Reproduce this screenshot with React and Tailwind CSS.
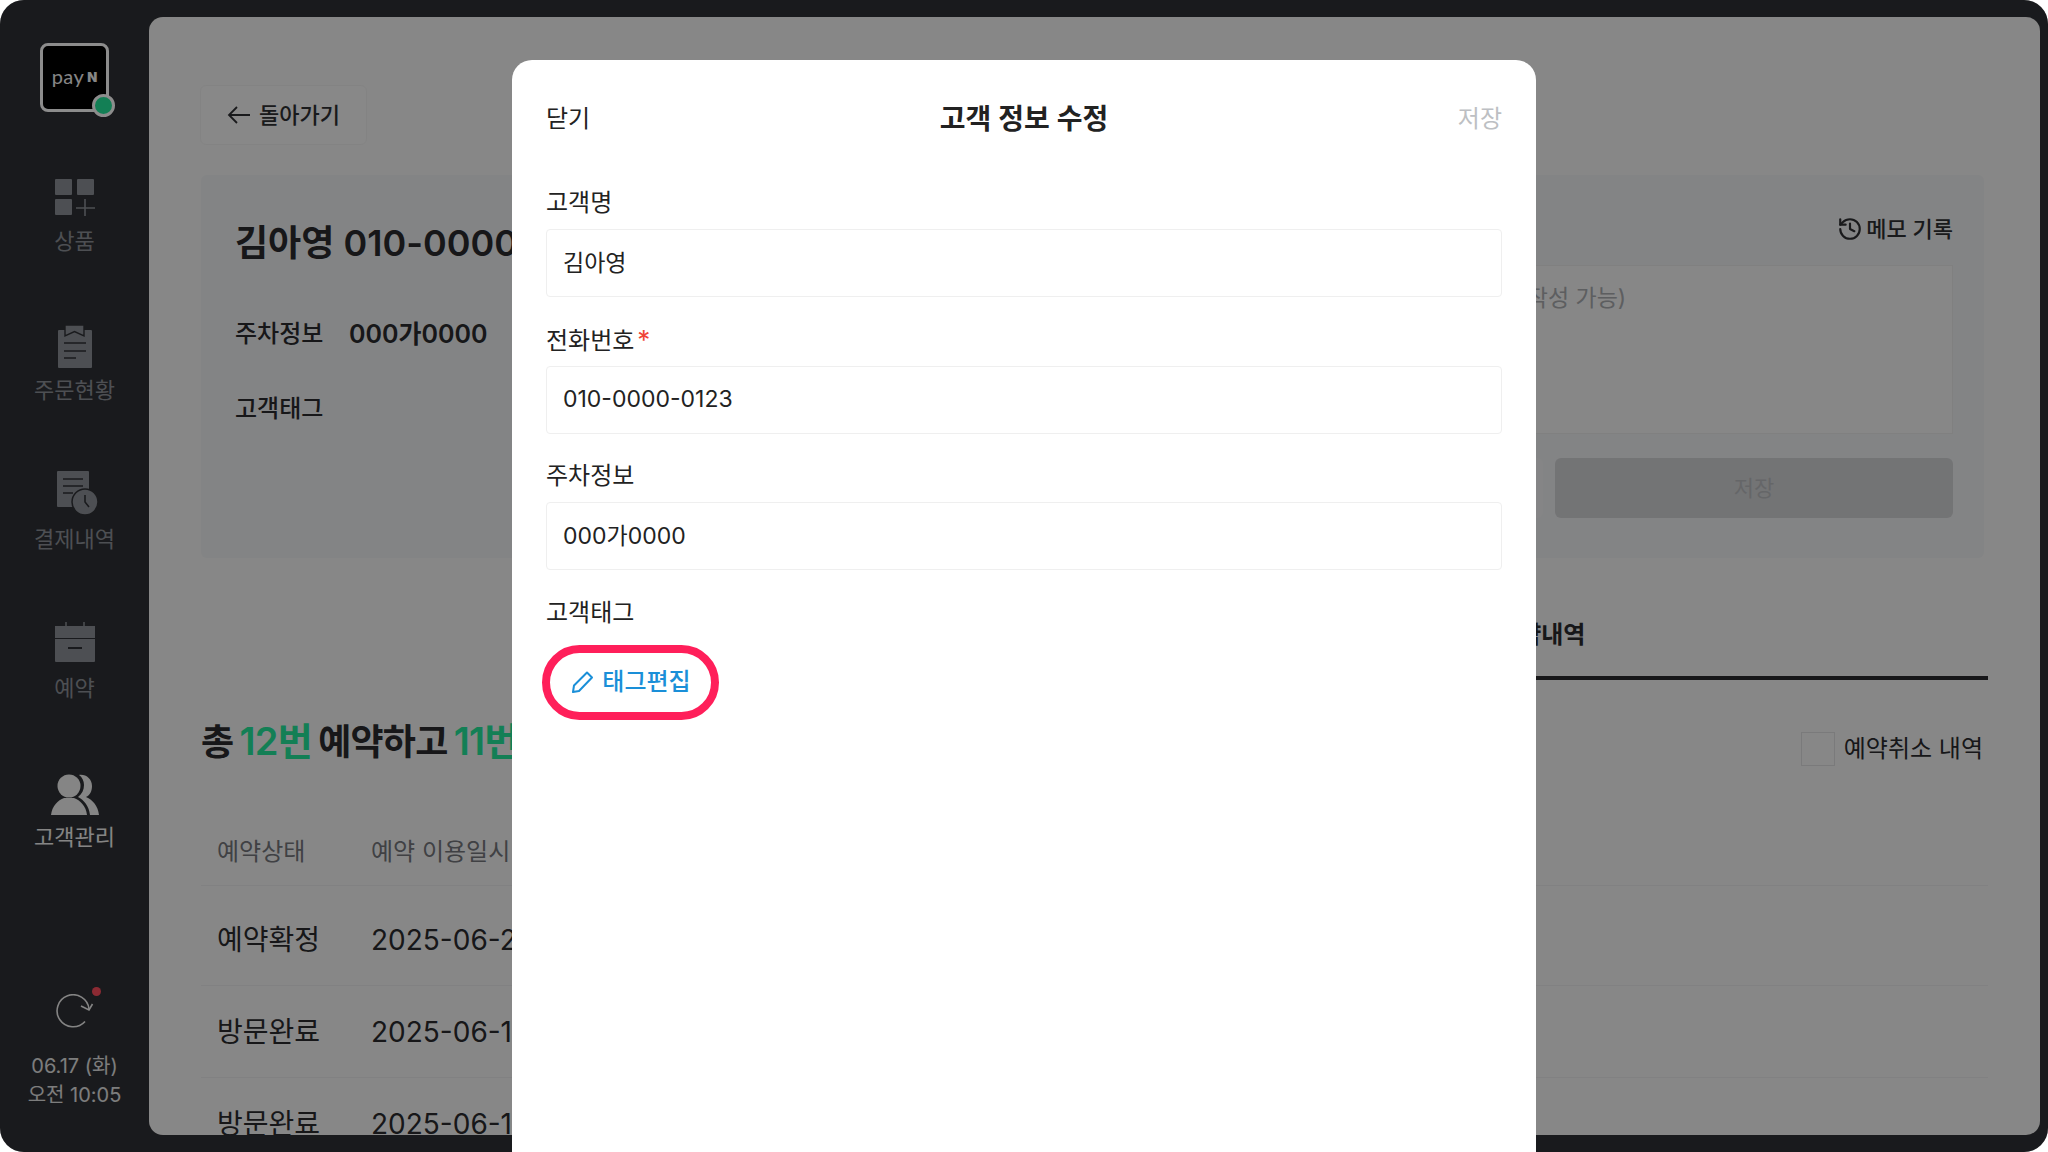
import { History } from "lucide-react";

const FONT = "font-['Inter','Noto_Sans_CJK_KR',sans-serif]";

const ProductIcon = () => (
  <svg width="42" height="40" viewBox="0 0 42 40" fill="none">
    <rect x="1" y="0" width="17" height="16" rx="1" fill="#8d9098" />
    <rect x="23" y="0" width="17" height="16" rx="1" fill="#8d9098" />
    <rect x="1" y="20" width="17" height="16" rx="1" fill="#8d9098" />
    <path d="M31 20v17M22 29h19" stroke="#8d9098" strokeWidth="1.6" />
  </svg>
);

const OrderIcon = () => (
  <svg width="36" height="43" viewBox="0 0 36 43" fill="none">
    <path d="M1 6a1 1 0 0 1 1-1h32a1 1 0 0 1 1 1v36a1 1 0 0 1-1 1H2a1 1 0 0 1-1-1z" fill="#8d9098" />
    <path d="M8 0h19v11l-9.500-4.500L8 11z" fill="#8d9098" stroke="#2f3135" strokeWidth="1.4" />
    <path d="M7 18h22M7 26h22M7 33h12" stroke="#2f3135" strokeWidth="1.6" />
  </svg>
);

const PaymentIcon = () => (
  <svg className="ml-[6px] mb-[2px]" width="42" height="44" viewBox="0 0 42 44" fill="none">
    <rect x="0" y="0" width="32" height="36" rx="1" fill="#8d9098" />
    <path d="M6 8h20M6 15h20M6 22h10" stroke="#2f3135" strokeWidth="1.6" />
    <circle cx="28" cy="31" r="13" fill="#8d9098" stroke="#2f3135" strokeWidth="1.5" />
    <path d="M28 24v7l4 5" stroke="#2f3135" strokeWidth="1.6" />
  </svg>
);

const ReserveIcon = () => (
  <svg className="mb-[4px]" width="40" height="40" viewBox="0 0 40 40" fill="none">
    <path d="M11 0v6M29 0v6" stroke="#8d9098" strokeWidth="1.5" />
    <path d="M0 4h40v12H0z" fill="#8d9098" />
    <path d="M0 17h40v22a1 1 0 0 1-1 1H1a1 1 0 0 1-1-1z" fill="#8d9098" />
    <path d="M13 26h14" stroke="#2f3135" strokeWidth="2" />
  </svg>
);

const CustomerIcon = () => (
  <svg width="48" height="41" viewBox="0 0 48 41" fill="none">
    <path d="M28 1C35 0 41 5 41 12c0 5-2 9-6 11 7 3 12 9 13 18h-9c-1-9-6-15-12-18 4-3 6-7 6-12 0-4-2-8-5-10z" fill="#f2f2f2" />
    <circle cx="18" cy="12" r="11.500" fill="#f2f2f2" />
    <path d="M0 41c1-9 7-15 13-17h10c6 2 12 8 13 17z" fill="#f2f2f2" />
  </svg>
);

const RefreshIcon = () => (
  <svg width="40" height="34" viewBox="0 0 40 34" fill="none">
    <path d="M33 15A16 16 0 1 0 29 27.500" stroke="#f0f0f0" strokeWidth="1.600" />
    <path d="M25 12l8 4 3.500-6" stroke="#f0f0f0" strokeWidth="1.600" />
  </svg>
);

const PenIcon = () => (
  <svg width="24" height="24" viewBox="0 0 24 24" fill="none" stroke="currentColor" strokeWidth="2" strokeLinejoin="round">
    <path d="M3 22l1-6.500L17 2.500l5 5L9 21z" />
  </svg>
);

const navItems = [
  { label: "상품", icon: ProductIcon },
  { label: "주문현황", icon: OrderIcon },
  { label: "결제내역", icon: PaymentIcon },
  { label: "예약", icon: ReserveIcon },
  { label: "고객관리", icon: CustomerIcon, active: true },
];

const rows = [
  { status: "예약확정", date: "2025-06-20 10:00", h: "h-[100px] pt-[8px]" },
  { status: "방문완료", date: "2025-06-12 14:00", h: "h-[92px]" },
  { status: "방문완료", date: "2025-06-10 11:00", h: "h-[92px]" },
];

function Sidebar() {
  return (
    <aside className="w-[149px] shrink-0 flex flex-col items-center pt-[43px] pb-[42px]">
      <div className="relative w-[69px] h-[69px] rounded-[8px] border-[3px] border-[#ffffff] bg-black flex items-center justify-center text-[#f4f4f4] font-['Lato',sans-serif]">
        <span className="text-[20px] leading-none tracking-[0.5px] pb-[3px]">pay</span>
        <span className="text-[13px] font-black leading-none ml-[3px] font-['Inter',sans-serif]">N</span>
        <span className="absolute -right-[9px] -bottom-[8px] w-[23px] h-[23px] rounded-full bg-[#24e89c] border-[3px] border-[#ffffff]" />
      </div>
      <nav className="mt-[63px] flex flex-col gap-[30.900px]">
        {navItems.map(({ label, icon: Icon, active }) => (
          <div key={label} className="h-[118px] flex flex-col items-center">
            <div className="h-[44px] flex items-end">
              <Icon />
            </div>
            <span className={`mt-[6px] text-[22px] leading-[32px] ${active ? "text-[#f2f2f2]" : "text-[#8d9098]"}`}>
              {label}
            </span>
          </div>
        ))}
      </nav>
      <div className="mt-auto flex flex-col items-center text-[#e4e4e4] text-[20px] leading-[29px]">
        <div className="relative mb-[24px] translate-x-[1px]">
          <RefreshIcon />
          <span className="absolute -top-[7px] right-[-5px] w-[9px] h-[9px] rounded-full bg-[#ff4d5e]" />
        </div>
        <span>06.17 (화)</span>
        <span>오전 10:05</span>
      </div>
    </aside>
  );
}

function Main() {
  return (
    <main className="flex-1 mt-[17px] mb-[17px] mr-[8px] rounded-[14px] bg-[#f6f6f6] overflow-hidden pl-[52px] pr-[52px] pt-[68px] text-[#2a2b2e]">
      <button className="-ml-[1px] w-[167px] h-[60px] rounded-[6px] border border-[#efefef] bg-[#f7f7f7] flex items-center justify-center gap-[8px] text-[22px] font-medium text-[#2f3033]">
        <svg width="24" height="20" viewBox="0 0 24 20" fill="none" stroke="currentColor" strokeWidth="1.800">
          <path d="M23 10H2M10 2l-8 8 8 8" />
        </svg>
        돌아가기
      </button>

      <section className="mt-[30px] h-[383px] w-[1783px] rounded-[6px] bg-[#eff0f2] flex justify-between pl-[34px] pr-[31px]">
        <div className="pt-[44px]">
          <h1 className="text-[36px] leading-[48px] font-semibold">김아영 010-0000-0123</h1>
          <div className="mt-[50px] flex items-center text-[24px] leading-[34px]">
            <span className="w-[114px] font-medium">주차정보</span>
            <span className="font-semibold text-[25px]">000가0000</span>
          </div>
          <div className="mt-[41px] text-[24px] leading-[34px] font-medium">고객태그</div>
        </div>
        <div className="w-[808px] pt-[36px] flex flex-col">
          <div className="flex justify-end items-center gap-[3px] text-[22px] leading-[36px] text-[#2f3033] font-medium">
            <History size={26} strokeWidth={2} />
            메모 기록
          </div>
          <div className="mt-[18px] h-[169px] border border-[#eaeaea] bg-[#f6f6f6] pl-[56px] pt-[16px] text-[23px] leading-[32px] text-[#a9abaf]">
            메모를 입력해주세요 (200자까지 작성 가능)
          </div>
          <div className="mt-[24px] grid grid-cols-2 gap-[12px]">
            <button className="h-[60px] rounded-[6px] bg-[#f2f3f4] text-[22px]">취소</button>
            <button className="h-[60px] rounded-[6px] bg-[#d2d3d6] text-[22px] text-[#b9bbbe]">저장</button>
          </div>
        </div>
      </section>

      <div className="mt-[36px] w-[1787px] grid grid-cols-2 h-[86px] text-[24px] font-semibold">
        <div className="flex items-center justify-center text-[#888]">고객정보</div>
        <div className="flex items-center justify-center border-b-[4px] border-[#2a2b2e]">예약내역</div>
      </div>

      <div className="mt-[36px] w-[1787px] h-[50px] flex justify-between">
        <h2 className="text-[36px] leading-[50px] font-semibold tracking-[-0.800px] [word-spacing:-2px]">
          총 <span className="text-[#24e89c] text-[38px]">12번</span> 예약하고 <span className="text-[#24e89c] text-[38px]">11번</span> 방문했어요
        </h2>
        <label className="self-end flex items-center gap-[9px] text-[24px] pr-[5px] translate-y-[1px]">
          <span className="w-[34px] h-[34px] border border-[#dfdfe1] bg-[#f6f6f6]" />
          예약취소 내역
        </label>
      </div>

      <div className="mt-[69px] w-[1787px] text-[#2a2b2e]">
        <div className="h-[51px] flex items-start pl-[16px] border-b border-[#ebebed] text-[24px] leading-[34px] text-[#75777c]">
          <span className="w-[154px]">예약상태</span>
          <span>예약 이용일시</span>
        </div>
        {rows.map((row) => (
          <div key={row.date} className={`${row.h} flex items-center pl-[16px] border-b border-[#ebebed] text-[28px]`}>
            <span className="w-[154px]">{row.status}</span>
            <span>{row.date}</span>
          </div>
        ))}
      </div>
    </main>
  );
}

function Field({ label, required, value }) {
  return (
    <div>
      <div className="h-[34px] text-[24px] leading-[34px] text-[#222]">
        {label}
        {required && <span className="text-[#f04438] text-[26px] ml-[3px]">*</span>}
      </div>
      <div className="mt-[9px] h-[68px] rounded-[4px] border border-[#efefef] flex items-center px-[16px] text-[23px]">
        {value}
      </div>
    </div>
  );
}

function EditModal() {
  return (
    <div className="absolute inset-0 bg-black/45 flex justify-center pt-[60px]">
      <div className="w-[1024px] h-[1092px] bg-white rounded-t-[20px] px-[34px] text-[#222]">
        <div className="h-[116px] pt-[2px] flex items-center justify-between text-[24px]">
          <span>닫기</span>
          <span className="text-[28px] font-semibold">고객 정보 수정</span>
          <span className="text-[#bdbfc3]">저장</span>
        </div>
        <div className="pt-[10px] flex flex-col gap-[25.500px]">
          <Field label="고객명" value="김아영" />
          <Field label="전화번호" required value="010-0000-0123" />
          <Field label="주차정보" value="000가0000" />
          <div>
            <div className="h-[34px] text-[24px] leading-[34px]">고객태그</div>
            <button className="mt-[15px] -ml-[4px] w-[177px] h-[75px] rounded-full border-[8px] border-[#ff1f5a] flex items-center justify-center gap-[8px] text-[24px] font-medium text-[#1a8fd8]">
              <PenIcon />
              태그편집
            </button>
          </div>
        </div>
      </div>
    </div>
  );
}

export default function App() {
  return (
    <div className={`w-[2048px] h-[1152px] bg-white ${FONT}`}>
      <div className="relative w-full h-full rounded-[24px] overflow-hidden bg-[#2f3135] flex">
        <Sidebar />
        <Main />
        <EditModal />
      </div>
    </div>
  );
}
